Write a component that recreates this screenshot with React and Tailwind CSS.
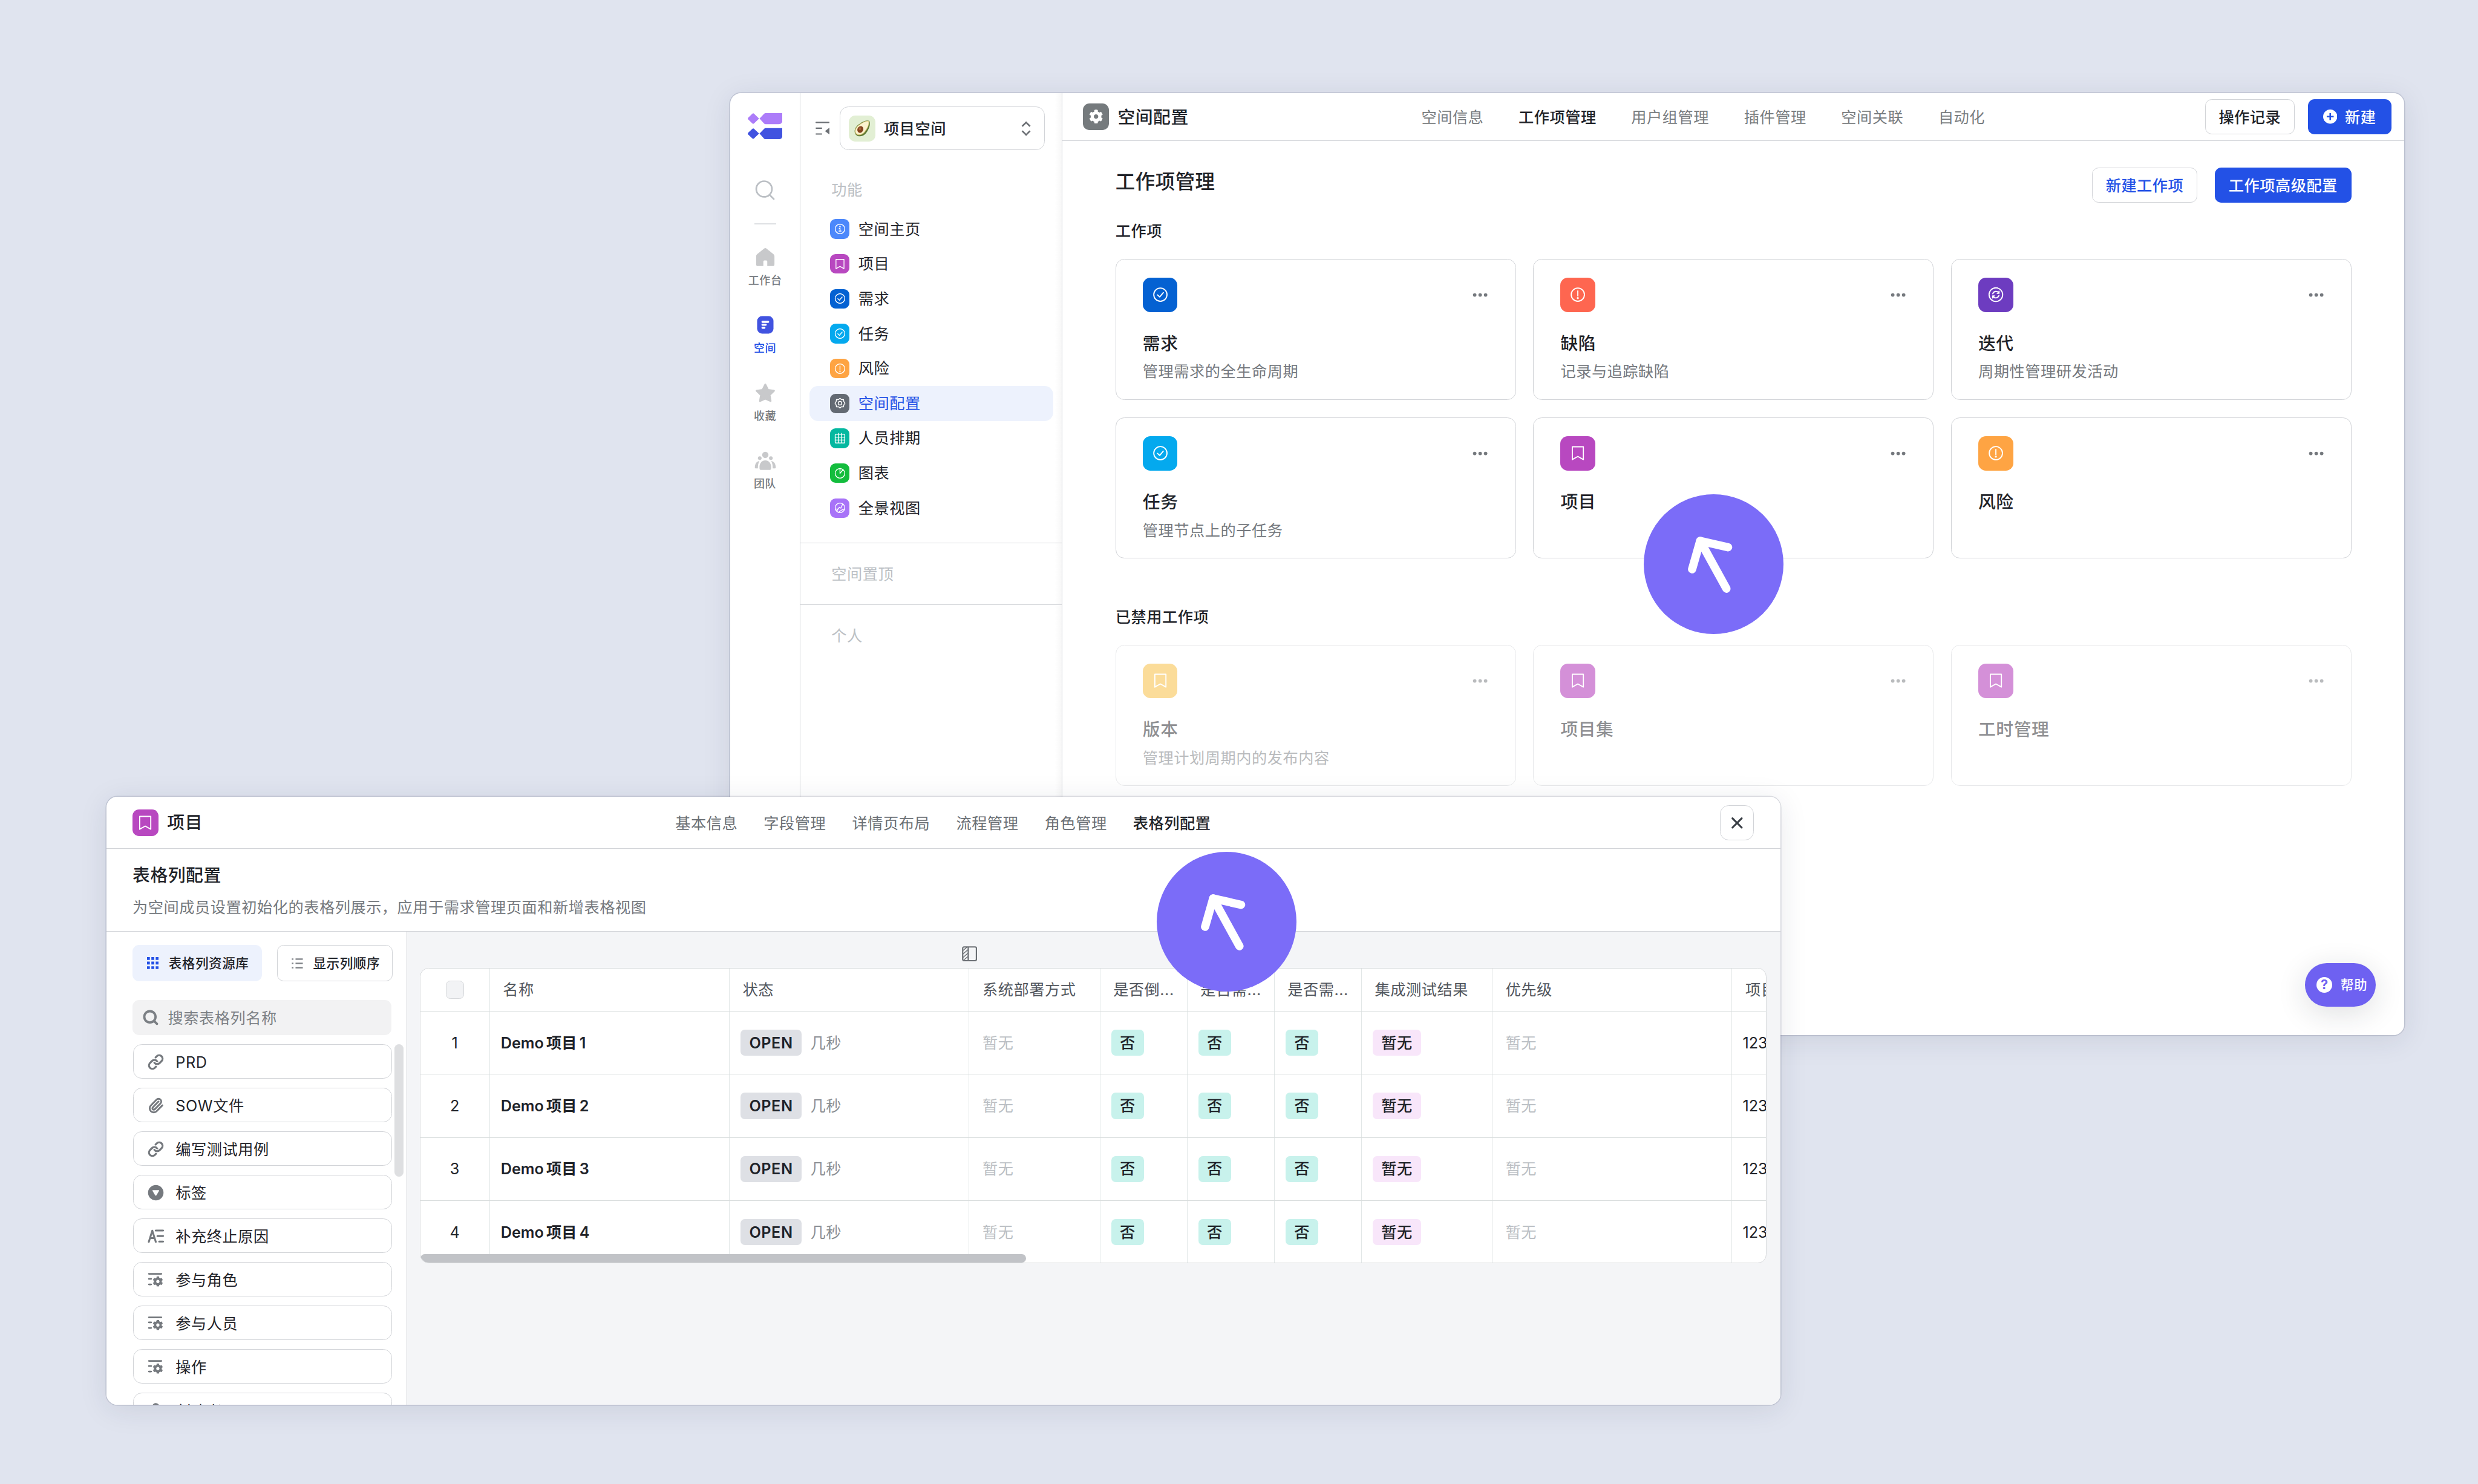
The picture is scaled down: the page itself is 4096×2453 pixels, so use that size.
import React from 'react';
import { Link, Paperclip, Search, X } from 'lucide-react';
import { FaCog } from 'react-icons/fa';
import clsx from 'clsx';

const Glyph = ({ name, size = 10.5 }) => (
  <svg
    width={size}
    height={size}
    viewBox="0 0 16 16"
    fill="none"
    stroke="currentColor"
    strokeWidth="1.15"
    strokeLinecap="round"
    strokeLinejoin="round"
  >
    {name === 'info' && (
      <>
        <circle cx="8" cy="8" r="6.7" />
        <path d="M6.9 7.3H8.1V11M6.6 11H9.6" />
        <circle cx="8" cy="4.9" r="0.5" fill="currentColor" />
      </>
    )}
    {name === 'bookmark' && <path d="M2.4 1.5H13.6V14.5L8 11.3L2.4 14.5Z" />}
    {name === 'check' && (
      <>
        <circle cx="8" cy="8" r="6.7" />
        <path d="M5 8.2L7.3 10.3L11 5.9" />
      </>
    )}
    {name === 'alert' && (
      <>
        <circle cx="8" cy="8" r="6.7" />
        <path d="M8 4.2V9.4" />
        <circle cx="8" cy="11.5" r="0.45" fill="currentColor" />
      </>
    )}
    {name === 'gear' && (
      <>
        <path d="M8 1.1L10 3L13 2.9L13.3 5.6L15 8L13.3 10.4L13 13.1L10 13L8 14.9L6 13L3 13.1L2.7 10.4L1 8L2.7 5.6L3 2.9L6 3Z" />
        <circle cx="8" cy="8" r="2.5" />
      </>
    )}
    {name === 'calendar' && (
      <>
        <rect x="1.3" y="2.4" width="13.4" height="12.2" rx="0.8" />
        <path d="M1.3 6.4H14.7M1.3 10.5H14.7M5.7 1V14.6M10.3 1V14.6" />
      </>
    )}
    {name === 'pie' && (
      <>
        <circle cx="8" cy="8" r="6.7" />
        <path d="M8 1.3V8L12 3.2" />
      </>
    )}
    {name === 'panorama' && (
      <>
        <circle cx="8" cy="8" r="6.7" />
        <path d="M2 9.8L5.4 9.4L7.2 7.2L9.2 8.4L11.8 2.6M6 14.2L9.8 11.4L14.3 9.6M5.4 9.4L3.6 12.4" />
      </>
    )}
    {name === 'cycle' && (
      <>
        <circle cx="8" cy="8" r="6.9" />
        <path d="M4.9 7.1A3.3 3.3 0 0 1 11 6.5M11.1 8.9A3.3 3.3 0 0 1 5 9.5M11.2 4.6V6.7H9.4M4.8 11.4V9.3H6.6" />
      </>
    )}
  </svg>
);

const Logo = () => (
  <svg width="32" height="24" viewBox="0 0 32 24">
    <g fill="#ac7cf9">
      <path d="M4.2 0.6Q5 -0.2 5.8 0.6L10.4 5L5.8 9.4Q5 10.2 4.2 9.4L0.3 5.7Q-0.2 5 0.3 4.3Z" />
      <path d="M10.8 5L15 0.6Q15.6 0 16.4 0H31.8V6.6Q31.8 10.2 28.2 10.2H16.4Q15.6 10.2 15 9.6Z" />
    </g>
    <g fill="#4153e0" transform="translate(0 13.8)">
      <path d="M4.2 0.6Q5 -0.2 5.8 0.6L10.4 5L5.8 9.4Q5 10.2 4.2 9.4L0.3 5.7Q-0.2 5 0.3 4.3Z" />
      <path d="M10.8 5L15 0.6Q15.6 0 16.4 0H31.8V6.6Q31.8 10.2 28.2 10.2H16.4Q15.6 10.2 15 9.6Z" />
    </g>
  </svg>
);

const RailIcon = ({ name }) => (
  <svg width="20" height="20" viewBox="0 0 20 20" fill="#c8c9cb">
    {name === 'home' && (
      <path d="M9 2.1Q10 1.3 11 2.1L17.4 7.2Q18.4 8 18.4 9.2V16.6Q18.4 18.2 16.8 18.2H11.8V14Q11.8 13 10.9 13H9.1Q8.2 13 8.2 14V18.2H3.2Q1.6 18.2 1.6 16.6V9.2Q1.6 8 2.6 7.2Z" />
    )}
    {name === 'space' && (
      <>
        <rect x="2.5" y="2" width="15" height="16" rx="4.5" fill="#4153e0" />
        <path
          d="M7.4 7.2H12.6M7.4 9.9H10.4M7.4 12.6H9.2"
          stroke="#fff"
          strokeWidth="1.9"
          strokeLinecap="round"
        />
      </>
    )}
    {name === 'star' && (
      <path
        d="M10 1.9L12.5 6.9L18 7.7L14 11.6L14.9 17.2L10 14.9L5.1 17.2L6 11.6L2 7.7L7.5 6.9Z"
        stroke="#c8c9cb"
        strokeWidth="1.6"
        strokeLinejoin="round"
      />
    )}
    {name === 'team' && (
      <>
        <circle cx="10" cy="4.4" r="2.9" />
        <circle cx="4.9" cy="7.4" r="1.7" />
        <circle cx="15.1" cy="7.4" r="1.7" />
        <path d="M10 9.4C13 9.4 15.3 12 15.3 15V16.6Q15.3 18.2 13.7 18.2H6.3Q4.7 18.2 4.7 16.6V15C4.7 12 7 9.4 10 9.4Z" />
        <path d="M4.6 10.2C3.5 12 3.2 14 3.2 16.8H1Q0.3 16.8 0.4 15.6C0.6 12.6 2 10.2 4.6 10.2ZM15.4 10.2C16.5 12 16.8 14 16.8 16.8H19Q19.7 16.8 19.6 15.6C19.4 12.6 18 10.2 15.4 10.2Z" />
      </>
    )}
  </svg>
);

const railItems = [
  { icon: 'home', label: '工作台' },
  { icon: 'space', label: '空间', active: true },
  { icon: 'star', label: '收藏' },
  { icon: 'team', label: '团队' },
];

const navItems = [
  { icon: 'info', label: '空间主页', color: 'bg-[#4c88fb]' },
  { icon: 'bookmark', label: '项目', color: 'bg-[#b848c0]' },
  { icon: 'check', label: '需求', color: 'bg-[#0461d2]' },
  { icon: 'check', label: '任务', color: 'bg-[#04a9ee]' },
  { icon: 'alert', label: '风险', color: 'bg-[#fea443]' },
  { icon: 'gear', label: '空间配置', color: 'bg-[#636a73]', active: true },
  { icon: 'calendar', label: '人员排期', color: 'bg-[#04b8a0]' },
  { icon: 'pie', label: '图表', color: 'bg-[#13bd3d]' },
  { icon: 'panorama', label: '全景视图', color: 'bg-[#a873f8]' },
];

const cards = [
  { icon: 'check', title: '需求', desc: '管理需求的全生命周期', color: 'bg-[#0461d2]' },
  { icon: 'alert', title: '缺陷', desc: '记录与追踪缺陷', color: 'bg-[#fe6650]' },
  { icon: 'cycle', title: '迭代', desc: '周期性管理研发活动', color: 'bg-[#6d3cc0]' },
  { icon: 'check', title: '任务', desc: '管理节点上的子任务', color: 'bg-[#04a9ee]' },
  { icon: 'bookmark', title: '项目', color: 'bg-[#b848c0]' },
  { icon: 'alert', title: '风险', color: 'bg-[#fea443]' },
];

const disabledCards = [
  { icon: 'bookmark', title: '版本', desc: '管理计划周期内的发布内容', color: 'bg-[#f9ba35]' },
  { icon: 'bookmark', title: '项目集', color: 'bg-[#ab23b3]' },
  { icon: 'bookmark', title: '工时管理', color: 'bg-[#ab23b3]' },
];

const Dots = () => (
  <svg width="14" height="4" viewBox="0 0 14 4" fill="#75797e">
    <circle cx="2" cy="2" r="1.6" />
    <circle cx="7" cy="2" r="1.6" />
    <circle cx="12" cy="2" r="1.6" />
  </svg>
);

const Card = ({ icon, title, desc, color, disabled }) => (
  <div
    className={clsx(
      'h-[129.5px] rounded-lg border border-[#d2d4d8] pt-[16.5px] pr-[25px] pl-[24.4px]',
      disabled && 'opacity-50'
    )}
  >
    <div className="flex items-center justify-between">
      <div className={clsx('flex size-8 items-center justify-center rounded-[7px] text-white', color)}>
        <Glyph name={icon} size={14.5} />
      </div>
      <Dots />
    </div>
    <div className="mt-[16.4px] text-base leading-6 font-medium">{title}</div>
    {desc && <div className="mt-[3.6px] text-sm leading-[22px] text-[#75797e]">{desc}</div>}
  </div>
);

const Rail = () => (
  <div className="flex w-[64.5px] shrink-0 flex-col items-center border-r border-[#d2d4d8] pt-[18.4px]">
    <Logo />
    <svg className="mt-[37px]" width="20" height="20" viewBox="0 0 20 20" fill="none" stroke="#bbbfc4" strokeWidth="1.5" strokeLinecap="round">
      <circle cx="8.9" cy="8.6" r="7.2" />
      <path d="M14 14L17.8 17.8" />
    </svg>
    <div className="mt-5 h-px w-5 bg-[#dee0e3]" />
    <div className="mt-[20.4px] flex flex-col gap-[24.2px]">
      {railItems.map((item) => (
        <div key={item.label} className="flex flex-col items-center gap-1">
          <RailIcon name={item.icon} />
          <span
            className={clsx(
              'text-[10px] leading-[14px] font-medium',
              item.active ? 'text-[#2351e6]' : 'text-[#75797e]'
            )}
          >
            {item.label}
          </span>
        </div>
      ))}
    </div>
  </div>
);

const SpacePanel = () => (
  <div className="w-[240.5px] shrink-0 border-r border-[#d2d4d8] bg-[linear-gradient(to_left,#f7f7f7,#ffffff_6px)]">
    <div className="mt-[12.4px] flex h-10 items-center pl-[13.5px]">
      <svg width="13" height="12.4" viewBox="0 0 13 12.4" fill="#6b6f74" stroke="#6b6f74" strokeWidth="1.2" strokeLinecap="round">
        <path d="M0.6 0.8H12.4M0.6 6H5.6M0.6 11.4H5.6" />
        <path d="M12.8 5.6V11.8L8.7 8.7Z" stroke="none" />
      </svg>
      <div className="ml-[9.5px] flex h-10 w-[188px] items-center rounded-lg border border-[#d2d4d8] bg-white pr-3 pl-2">
        <div className="size-6 rounded-md bg-[#e2efd4]">
          <svg width="24" height="24" viewBox="0 0 24 24">
            <path d="M18.8 4.9C20.3 8 18.5 13 15.5 16.5C13 19.4 8.6 20 6.4 17.5C4.1 14.6 5.8 10.6 9 8.2C12 6 16 3.6 18.8 4.9Z" fill="#5f7a34" />
            <path d="M18.3 5C19.2 7.5 17.6 12 14.6 15.4C12.2 18.2 8.3 18.8 6.5 16.8C4.6 14.4 6.2 10.8 9.2 8.6C12.1 6.5 15.6 4.3 18.3 5Z" fill="#d9c97c" />
            <path d="M18 5.5C18.6 7.6 17 11.6 14.2 14.8C12 17.4 8.5 18 6.9 16.2C5.3 14 6.8 11 9.5 9C12.2 7 15.6 4.9 18 5.5Z" fill="#fbf3cf" />
            <ellipse cx="10.6" cy="12.8" rx="2.7" ry="3.2" transform="rotate(25 10.6 12.8)" fill="#84441f" />
            <ellipse cx="10.2" cy="12.1" rx="1.1" ry="1.3" fill="#a8653a" />
          </svg>
        </div>
        <span className="ml-2 flex-1 pt-px text-sm font-medium">项目空间</span>
        <svg width="9" height="14" viewBox="0 0 9 14" fill="none" stroke="#6b6f74" strokeWidth="1.5">
          <path d="M0.9 4.9L4.5 1.3L8.1 4.9M0.9 9.1L4.5 12.7L8.1 9.1" />
        </svg>
      </div>
    </div>

    <div className="mt-[26.2px] pl-[28.3px] text-sm leading-[22px] text-[#bbbfc4]">功能</div>
    <div className="mt-[8.2px] px-2 pb-4">
      {navItems.map((item) => (
        <div
          key={item.label}
          className={clsx(
            'flex h-8 items-center gap-2 rounded-lg pl-[19px] text-sm',
            item.active && 'bg-[#edf2fd] text-[#2351e6]'
          )}
        >
          <div className={clsx('flex size-[18px] items-center justify-center rounded-[5px] text-white', item.color)}>
            <Glyph name={item.icon} />
          </div>
          {item.label}
        </div>
      ))}
    </div>
    <div className="flex h-[57px] items-center border-y border-[#d2d4d8] pl-[28.3px] text-sm text-[#bbbfc4]">空间置顶</div>
    <div className="flex h-[57px] items-center pl-[28.3px] text-sm text-[#bbbfc4]">个人</div>
  </div>
);

const SpaceWindow = () => (
  <div className="absolute top-[85.4px] left-[670px] flex h-[864.4px] w-[1536px] overflow-hidden rounded-[10px] bg-white">
    <Rail />
    <SpacePanel />
    <div className="min-w-0 flex-1">
      <div className="flex h-11 items-center border-b border-[#d2d4d8] pr-3 pl-[18.5px]">
        <div className="flex size-6 items-center justify-center rounded-md bg-[#757a7d] text-white">
          <FaCog size={13} />
        </div>
        <span className="ml-2 pt-px text-base font-medium">空间配置</span>
        <div className="ml-[213.5px] flex gap-8 pt-px text-sm text-[#787c80]">
          <span>空间信息</span>
          <span className="font-medium text-[#1f2329]">工作项管理</span>
          <span>用户组管理</span>
          <span>插件管理</span>
          <span>空间关联</span>
          <span>自动化</span>
        </div>
        <div className="ml-auto flex gap-3 text-sm font-medium">
          <div className="flex h-8 w-[82.5px] items-center justify-center rounded-md border border-[#d2d4d8] pt-px">操作记录</div>
          <div className="flex h-8 w-[76.5px] items-center justify-center gap-[7px] rounded-md bg-[#2351e6] text-white">
            <svg width="13" height="13" viewBox="0 0 13 13">
              <circle cx="6.5" cy="6.5" r="6.5" fill="#fff" />
              <path d="M6.5 3.3V9.7M3.3 6.5H9.7" stroke="#2351e6" strokeWidth="1.4" />
            </svg>
            <span className="pt-px">新建</span>
          </div>
        </div>
      </div>

      <div className="px-[48.5px] pt-[24.3px]">
        <div className="flex items-start justify-between">
          <h1 className="pt-[0.8px] text-lg leading-[26px] font-medium">工作项管理</h1>
          <div className="flex gap-4 text-sm font-medium">
            <div className="flex h-8 w-[96.5px] items-center justify-center rounded-md border border-[#d2d4d8] pt-px text-[#2351e6]">新建工作项</div>
            <div className="flex h-8 w-[125.5px] items-center justify-center rounded-md bg-[#2351e6] pt-px text-white">工作项高级配置</div>
          </div>
        </div>

        <h2 className="mt-[15.6px] text-sm leading-[22px] font-medium">工作项</h2>
        <div className="mt-[14.2px] grid grid-cols-3 gap-4">
          {cards.map((card) => (
            <Card key={card.title} {...card} />
          ))}
        </div>

        <h2 className="mt-[43px] text-sm leading-[22px] font-medium">已禁用工作项</h2>
        <div className="mt-[14.2px] grid grid-cols-3 gap-4">
          {disabledCards.map((card) => (
            <Card key={card.title} {...card} disabled />
          ))}
        </div>
      </div>
    </div>

    {/* Floating help button */}
    <div className="absolute right-[26px] bottom-[26px] flex h-10 w-[65px] items-center gap-[7.5px] rounded-full bg-[#6e61f1] pl-[10.5px] text-xs font-medium text-white shadow-[0_6px_28px_rgba(31,35,41,0.14)]">
      <span className="flex size-[14.5px] items-center justify-center rounded-full bg-white text-xs leading-none font-bold text-[#6e61f1]">?</span>
      帮助
    </div>
  </div>
);

const FieldIcon = ({ name }) => {
  if (name === 'link') return <Link size={15} strokeWidth={2.9} />;
  if (name === 'clip') return <Paperclip size={15} strokeWidth={2.6} />;
  return (
    <svg width="15" height="15" viewBox="0 0 15 15" fill="currentColor">
      {name === 'select' && (
        <path
          fillRule="evenodd"
          d="M7.5 0.4A7.1 7.1 0 1 1 7.5 14.6A7.1 7.1 0 1 1 7.5 0.4ZM4.8 5.2Q4.2 5.2 4.5 5.8L6.9 9.9Q7.5 10.7 8.1 9.9L10.5 5.8Q10.8 5.2 10.2 5.2Z"
        />
      )}
      {name === 'text' && (
        <path
          d="M1.1 12.6L4.3 2.4L7.5 12.6M2.3 9.2H6.4M7.4 2.2H14.2M9 7.3H14.2M10.6 12.4H14.2"
          fill="none"
          stroke="currentColor"
          strokeWidth="1.7"
          strokeLinecap="round"
          strokeLinejoin="round"
        />
      )}
      {name === 'config' && (
        <>
          <path d="M1.2 2H12.6M1.2 6.6H3.2M1.2 11.7H3.2" stroke="currentColor" strokeWidth="1.6" strokeLinecap="round" />
          <FaCog x={4.6} y={4.2} size={9.6} />
        </>
      )}
      {name === 'user' && (
        <>
          <circle cx="7.5" cy="4" r="3.3" />
          <path d="M1 14C1 10.5 4 8.6 7.5 8.6S14 10.5 14 14Z" />
        </>
      )}
    </svg>
  );
};

const fields = [
  { icon: 'link', label: 'PRD' },
  { icon: 'clip', label: 'SOW文件' },
  { icon: 'link', label: '编写测试用例' },
  { icon: 'select', label: '标签' },
  { icon: 'text', label: '补充终止原因' },
  { icon: 'config', label: '参与角色' },
  { icon: 'config', label: '参与人员' },
  { icon: 'config', label: '操作' },
  { icon: 'user', label: '创建者' },
];

const FieldLibrary = () => (
  <div className="w-[275.7px] shrink-0 border-r border-[#d2d4d8] bg-white pt-3 pl-[23.6px]">
    <div className="flex gap-3.5 text-xs font-medium">
      <div className="flex h-[33.5px] w-[119px] items-center gap-[9px] rounded-md bg-[#edf2fd] pl-[13.7px]">
        <svg width="10.6" height="11" viewBox="0 0 10.6 11" fill="#2351e6">
          <path d="M0 0H2.6V2.6H0ZM4 0H6.6V2.6H4ZM8 0H10.6V2.6H8ZM0 4.2H2.6V6.8H0ZM4 4.2H6.6V6.8H4ZM8 4.2H10.6V6.8H8ZM0 8.4H2.6V11H0ZM4 8.4H6.6V11H4ZM8 8.4H10.6V11H8Z" />
        </svg>
        表格列资源库
      </div>
      <div className="flex h-[33.5px] w-[106px] items-center gap-[9px] rounded-md border border-[#d2d4d8] pl-[12.8px]">
        <svg width="10.5" height="10.5" viewBox="0 0 10.5 10.5" stroke="#7c8085" strokeWidth="1.2">
          <path d="M0.2 1.3H1.7M3.6 1.3H10.3M0.2 5.2H1.7M3.6 5.2H10.3M0.2 9.2H1.7M3.6 9.2H10.3" />
        </svg>
        显示列顺序
      </div>
    </div>
    <div className="mt-[17px] flex h-8 w-[238px] items-center gap-2 rounded-md bg-[#f2f2f3] pl-[9.2px] text-sm text-[#7c8085]">
      <Search size={15.5} strokeWidth={3.3} />
      <span className="pt-px">搜索表格列名称</span>
    </div>
    <div className="mt-[8.4px] flex gap-[2.4px] pl-[0.6px]">
      <div className="flex w-[237.6px] flex-col gap-[8.1px]">
        {fields.map((field) => (
          <div key={field.label} className="flex h-[31.9px] items-center rounded-lg border border-[#d2d4d8] pt-px pl-[13px] text-sm">
            <span className="text-[#75797e]">
              <FieldIcon name={field.icon} />
            </span>
            <span className="ml-[10.6px] pt-px">{field.label}</span>
          </div>
        ))}
      </div>
      <div className="h-[122px] w-2 rounded-full bg-[#dedfe1]" />
    </div>
  </div>
);

const columns = ['名称', '状态', '系统部署方式', '是否倒...', '是否需...', '是否需...', '集成测试结果', '优先级', '项目'];

const Cell = ({ children, className }) => (
  <div className={clsx('flex items-center overflow-hidden border-r border-[#e2e7e7] whitespace-nowrap', className)}>{children}</div>
);

const Tag = ({ children, className }) => (
  <span className={clsx('flex h-6 items-center rounded px-2 font-medium', className)}>{children}</span>
);

const tableGrid = 'grid grid-cols-[63.6px_220px_220px_120px_80px_80px_80px_120px_220px_60px]';

const FieldTable = () => (
  <div className="relative mt-[6px] ml-[11.8px] h-[271.2px] w-[1235.8px] overflow-hidden rounded-lg border border-[#d8dbdd] bg-white text-sm">
    <div className={clsx(tableGrid, 'h-[39.6px] border-b border-[#d9dddd] text-[#51565d]')}>
      <Cell className="justify-center">
        <span className="size-[17px] rounded border border-[#d6d8db] bg-[#f2f3f5]" />
      </Cell>
      {columns.map((label, i) => (
        <Cell key={i} className="pl-3">
          {label}
        </Cell>
      ))}
    </div>
    {[1, 2, 3, 4].map((n) => (
      <div key={n} className={clsx(tableGrid, 'h-[57.9px] border-b border-[#d9dddd]')}>
        <Cell className="justify-center">{n}</Cell>
        <Cell className="pl-2.5 font-semibold tracking-normal [word-spacing:-1.2px]">Demo 项目 {n}</Cell>
        <Cell className="gap-2 pl-2.5">
          <Tag className="bg-[#dee0e5] font-semibold">OPEN</Tag>
          <span className="text-[#8b8f94]">几秒</span>
        </Cell>
        <Cell className="pl-[12px] text-[#bbbfc4]">暂无</Cell>
        <Cell className="pl-2.5">
          <Tag className="bg-[#c8f2ec]">否</Tag>
        </Cell>
        <Cell className="pl-2.5">
          <Tag className="bg-[#c8f2ec]">否</Tag>
        </Cell>
        <Cell className="pl-2.5">
          <Tag className="bg-[#c8f2ec]">否</Tag>
        </Cell>
        <Cell className="pl-2.5">
          <Tag className="bg-[#f8e6fa]">暂无</Tag>
        </Cell>
        <Cell className="pl-[12px] text-[#bbbfc4]">暂无</Cell>
        <Cell className="pl-[9.5px] tracking-normal">123</Cell>
      </div>
    ))}
    <div className="absolute bottom-0 left-0 h-2 w-[555.5px] rounded-full bg-[#c1c3c7]" />
  </div>
);

const ConfigWindow = () => (
  <div className="absolute top-[731px] left-[97.8px] flex h-[557.8px] w-[1536px] flex-col overflow-hidden rounded-[10px] bg-white">
    <div className="grid h-12 shrink-0 grid-cols-[1fr_auto_1fr] items-center border-b border-[#d2d4d8] pt-[0.5px] pr-[24.6px] pl-[23.6px]">
      <div className="flex items-center gap-2">
        <div className="flex size-6 items-center justify-center rounded-md bg-[#b848c0] text-white">
          <Glyph name="bookmark" size={14.5} />
        </div>
        <span className="text-base font-medium">项目</span>
      </div>
      <div className="flex gap-6 pt-px text-sm text-[#6b7075]">
        <span>基本信息</span>
        <span>字段管理</span>
        <span>详情页布局</span>
        <span>流程管理</span>
        <span>角色管理</span>
        <span className="font-medium text-[#1f2329]">表格列配置</span>
      </div>
      <div className="flex h-8 w-[31px] items-center justify-center justify-self-end rounded-lg border border-[#d2d4d8]">
        <X size={17} strokeWidth={2.4} className="text-[#373c43]" />
      </div>
    </div>

    <div className="h-[76px] shrink-0 border-b border-[#d2d4d8] pt-[12px] pl-[23.8px]">
      <div className="text-base leading-6 font-medium">表格列配置</div>
      <div className="mt-[7px] text-sm leading-[22px] text-[#75797e]">为空间成员设置初始化的表格列展示，应用于需求管理页面和新增表格视图</div>
    </div>

    <div className="flex min-h-0 flex-1">
      <FieldLibrary />
      <div className="min-w-0 flex-1 bg-[#f4f5f7] pt-[13px]">
        <svg className="ml-[509px]" width="14" height="14" viewBox="0 0 14 14" fill="none" stroke="#6b6f74" strokeWidth="1.2">
          <rect x="0.7" y="0.7" width="12.6" height="12.6" rx="1.2" />
          <path d="M5.8 0.7V13.3" />
          <path d="M0.9 4L4.6 0.9M0.9 7.2L5.6 3.2M0.9 10.4L5.6 6.4M1.6 12.8L5.6 9.4" strokeWidth="0.8" />
        </svg>
        <FieldTable />
      </div>
    </div>
  </div>
);

const Pointer = ({ className }) => (
  <div className={clsx('absolute size-32 rounded-full bg-[#7b6cf8]', className)}>
    <svg width="128" height="128" viewBox="0 0 128 128" fill="none" stroke="#fff" strokeWidth="7.6" strokeLinecap="round" strokeLinejoin="round">
      <path d="M77.4 48.6L51.8 42.8L44.4 68.8" />
      <path d="M51.8 42.8L75.9 86.6" />
    </svg>
  </div>
);

export default function App() {
  return (
    <div className="h-[2453px] w-[4096px] overflow-hidden bg-[#e0e4ef]">
      <div className="relative h-[1361.6px] w-[2273.6px] font-['Inter','Noto_Sans_CJK_SC',sans-serif] tracking-[0.018em] text-[#1f2329] [zoom:1.80155]">
        <div className="absolute top-[85.4px] left-[670px] h-[864.4px] w-[1536px] rounded-[10px] shadow-[0_0_0_0.9px_rgba(31,35,70,0.14),0_4px_26px_rgba(31,35,70,0.1)]" />
        <SpaceWindow />
        <Pointer className="top-[453.6px] left-[1508.2px]" />
        <div className="absolute top-[731px] left-[97.8px] h-[557.8px] w-[1536px] rounded-[10px] shadow-[0_0_0_0.9px_rgba(31,35,70,0.14),0_4px_26px_rgba(31,35,70,0.1)]" />
        <ConfigWindow />
        <Pointer className="top-[781.6px] left-[1061.3px]" />
      </div>
    </div>
  );
}
